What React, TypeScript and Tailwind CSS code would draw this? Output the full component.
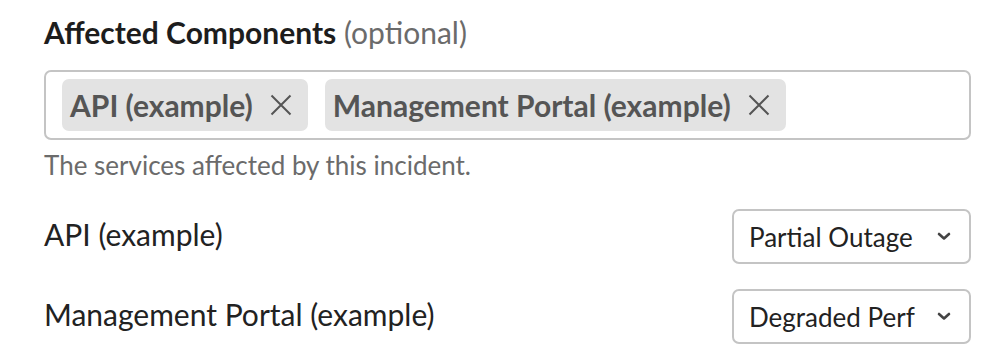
import React from "react";

function XIcon() {
  return (
    <svg width="22" height="22" viewBox="0 0 22 22" fill="none" stroke="#555" strokeWidth="2" strokeLinecap="butt">
      <path d="M1.5 1.5 L20.5 20.5 M20.5 1.5 L1.5 20.5" />
    </svg>
  );
}

function Chevron() {
  return (
    <svg width="14" height="9" viewBox="0 0 14 9" fill="none" stroke="#444" strokeWidth="2.6" strokeLinecap="round" strokeLinejoin="round">
      <path d="M2 2 L7 6.5 L12 2" />
    </svg>
  );
}

function Chip({ label }: { label: string }) {
  return (
    <div className="flex items-center h-[52px] rounded-[7px] bg-[#e3e3e3] pl-[8px] pr-[16px] gap-[17px]">
      <span className="text-[30px] font-bold text-[#555] leading-none">{label}</span>
      <XIcon />
    </div>
  );
}

function Select({ value }: { value: string }) {
  return (
    <div className="flex items-center justify-between w-[239px] h-[55px] rounded-[7px] border-2 border-[#c4c4c4] bg-white pl-[15px] pr-[18px]">
      <span className="text-[26px] text-[#222] leading-none">{value}</span>
      <Chevron />
    </div>
  );
}

export default function App() {
  return (
    <div
      className="w-[1008px] h-[364px] bg-white pl-[44px] pt-[14px]"
      style={{ fontFamily: "Lato, 'Open Sans', sans-serif" }}
    >
      <div className="w-[927px]">
        <div className="text-[30px] leading-[36px] text-[#1d1d1d]">
          <span className="font-bold">Affected Components</span>{" "}
          <span className="text-[#6b6b6b]">(optional)</span>
        </div>
        <div className="mt-[20px] h-[70px] rounded-[7px] border-2 border-[#c4c4c4] flex items-center pl-[16px] gap-[17px]">
          <Chip label="API (example)" />
          <Chip label="Management Portal (example)" />
        </div>
        <div className="mt-[10px] text-[26px] leading-[30px] text-[#6b6b6b]">
          The services affected by this incident.
        </div>
        <div className="mt-[29px] flex items-center justify-between">
          <span className="text-[30px] text-[#222] leading-none pb-[6px]">API (example)</span>
          <Select value="Partial Outage" />
        </div>
        <div className="mt-[25px] flex items-center justify-between">
          <span className="text-[30px] text-[#222] leading-none pb-[6px]">Management Portal (example)</span>
          <Select value="Degraded Perf" />
        </div>
      </div>
    </div>
  );
}
